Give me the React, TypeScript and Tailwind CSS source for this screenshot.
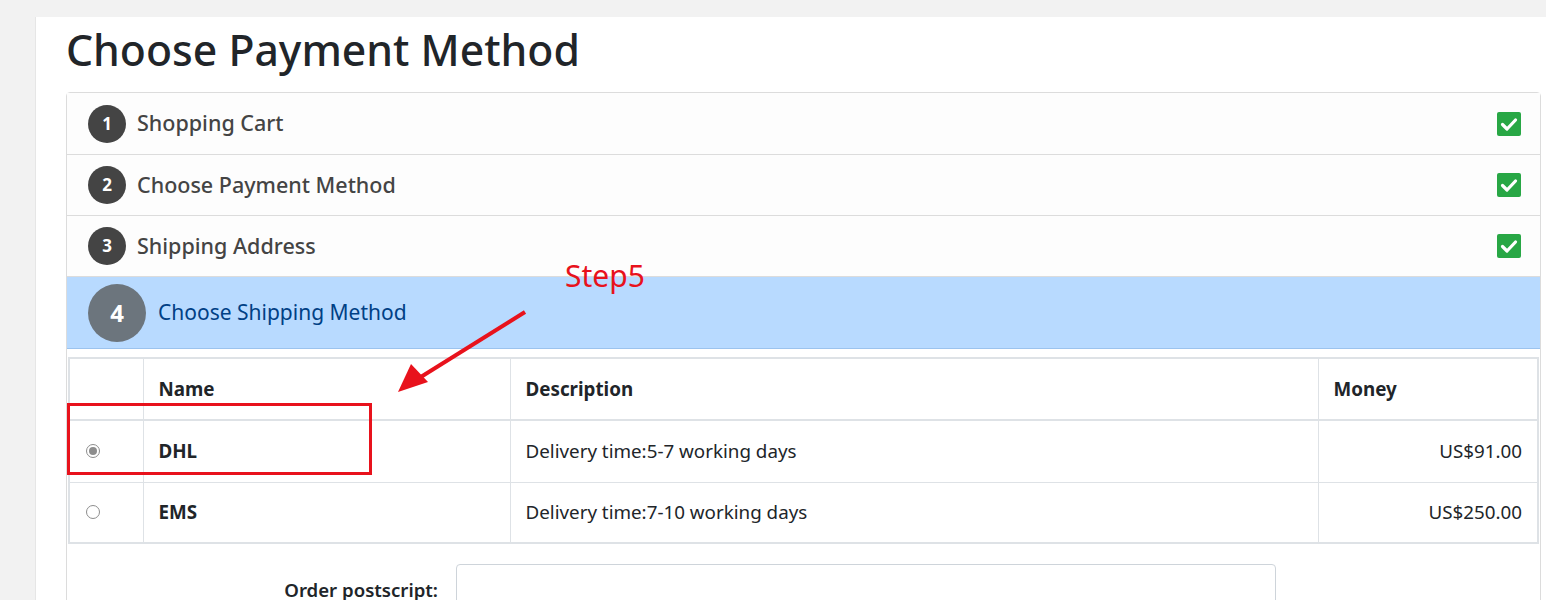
import React from "react";

const font = { fontFamily: '"Noto Sans", "Open Sans", sans-serif' };

function CheckIcon() {
  return (
    <svg width="24" height="24" viewBox="0 0 24 24">
      <rect x="0" y="0" width="24" height="24" rx="2" fill="#28a745" />
      <path d="M5.5 12.5 L10 17 L18.5 8" stroke="#fff" strokeWidth="3.2" fill="none" strokeLinecap="round" strokeLinejoin="round" />
    </svg>
  );
}

function StepRow({ n, label, first }: { n: number; label: string; first?: boolean }) {
  return (
    <div className={`flex items-center ${first ? "h-[62px]" : "h-[61px]"} border-b border-[#dcdcdc] bg-[#fdfdfd] pl-[21px] pr-[19px]`}>
      <div className="w-[38px] h-[38px] rounded-full bg-[#444444] text-white flex items-center justify-center text-[17px] font-bold">
        {n}
      </div>
      <div className="ml-[11px] text-[21.5px] font-medium text-[#444444] flex-1">{label}</div>
      <CheckIcon />
    </div>
  );
}

function Radio({ checked }: { checked?: boolean }) {
  return (
    <span className="flex w-[14px] h-[14px] rounded-full border border-[#8d8d8d] bg-white items-center justify-center">
      {checked && <span className="w-[8px] h-[8px] rounded-full bg-[#8d8d8d]" />}
    </span>
  );
}

export default function App() {
  return (
    <div className="min-h-[600px] bg-[#f2f2f2] pt-[17px] pl-[35px] overflow-hidden" style={font}>
      <div className="relative bg-white border-l border-[#e6e6e6] pl-[30px] pr-[5px] min-h-[600px]">
        <h1 className="text-[42.7px] leading-[62px] text-[#212529] pt-[2px] pb-[11px] font-medium">Choose Payment Method</h1>
        <div className="border border-[#dcdcdc] rounded-[4px]">
          <StepRow n={1} label="Shopping Cart" first />
          <StepRow n={2} label="Choose Payment Method" />
          <StepRow n={3} label="Shipping Address" />
          <div className="flex items-center h-[72px] bg-[#b8daff] border-b border-[#9cc3ee] pl-[21px]">
            <div className="w-[58px] h-[58px] rounded-full bg-[#6c757d] text-white flex items-center justify-center text-[24px] font-bold">
              4
            </div>
            <div className="ml-[12px] text-[21px] text-[#004085]">Choose Shipping Method</div>
          </div>
          <div className="px-[1px] pt-[8px] pb-[20px]">
            <table className="w-full border-2 border-[#dee2e6] border-collapse text-[18.8px] text-[#212529]">
              <thead>
                <tr className="h-[62px] border-b-2 border-[#dee2e6]">
                  <th className="w-[74px] border border-[#dee2e6]"></th>
                  <th className="w-[367px] border border-[#dee2e6] text-left pl-[15px] font-bold">Name</th>
                  <th className="border border-[#dee2e6] text-left pl-[15px] font-bold">Description</th>
                  <th className="w-[220px] border border-[#dee2e6] text-left pl-[15px] font-bold">Money</th>
                </tr>
              </thead>
              <tbody>
                <tr className="h-[62px]">
                  <td className="border border-[#dee2e6] pl-[16px] align-middle"><Radio checked /></td>
                  <td className="border border-[#dee2e6] pl-[15px] font-bold">DHL</td>
                  <td className="border border-[#dee2e6] pl-[15px]">Delivery time:5-7 working days</td>
                  <td className="border border-[#dee2e6] text-right pr-[15px]">US$91.00</td>
                </tr>
                <tr className="h-[61px]">
                  <td className="border border-[#dee2e6] pl-[16px] align-middle"><Radio /></td>
                  <td className="border border-[#dee2e6] pl-[15px] font-bold">EMS</td>
                  <td className="border border-[#dee2e6] pl-[15px]">Delivery time:7-10 working days</td>
                  <td className="border border-[#dee2e6] text-right pr-[15px]">US$250.00</td>
                </tr>
              </tbody>
            </table>
            <div className="flex items-start mt-[20px]">
              <div className="w-[370px] text-right text-[18.6px] font-semibold text-[#212529] pt-[12px]">Order postscript:</div>
              <div className="ml-[18px] w-[820px] h-[44px] border border-[#ced4da] rounded-[4px] bg-white" />
            </div>
          </div>
        </div>

        {/* annotations */}
        <div className="absolute left-[529px] top-[236px] text-[30px] text-[#e8121c]" style={{ fontFamily: '"Noto Sans", sans-serif' }}>
          Step5
        </div>
        <svg className="absolute left-0 top-0 pointer-events-none" width="1510" height="583">
          <line x1="489" y1="295" x2="380" y2="363" stroke="#e8121c" strokeWidth="4" />
          <polygon points="362,375 375,347 392,365" fill="#e8121c" />
          <rect x="32.5" y="387.5" width="302" height="69" fill="none" stroke="#e8121c" strokeWidth="3" />
        </svg>
      </div>
    </div>
  );
}
